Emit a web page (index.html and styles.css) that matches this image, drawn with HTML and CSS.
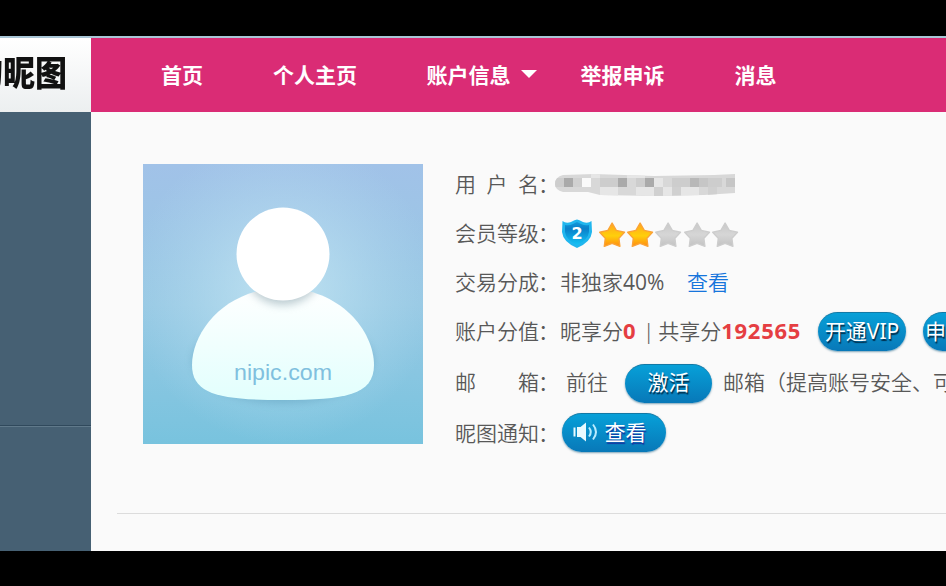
FILE: index.html
```
<!DOCTYPE html>
<html lang="zh-CN">
<head>
    <meta charset="UTF-8">
    <title>我的昵图</title>
    <link rel="stylesheet" href="styles.css">
</head>
<body>
    <svg class="defs" width="0" height="0">
        <defs>
            <linearGradient id="gold" x1="0" y1="0" x2="0" y2="1">
                <stop offset="0" stop-color="#ffa51c"/>
                <stop offset="0.55" stop-color="#ffcf0b"/>
                <stop offset="1" stop-color="#ff8a10"/>
            </linearGradient>
            <linearGradient id="silver" x1="0" y1="0" x2="0" y2="1">
                <stop offset="0" stop-color="#c8c8c8"/>
                <stop offset="0.5" stop-color="#d6d6d6"/>
                <stop offset="1" stop-color="#c2c2c2"/>
            </linearGradient>
            <symbol id="star" viewBox="0 0 28 28">
                <path d="M14 2 L18.2 9.4 L26.4 11.2 L20.8 17.4 L21.8 25.4 L14 22.4 L6.2 25.4 L7.2 17.4 L1.6 11.2 L9.8 9.4 Z" stroke-width="1.4" stroke-linejoin="round"/>
            </symbol>
        </defs>
    </svg>
    <div class="page">
        <div class="sidebar">
            <div class="logo"><span>的昵图</span></div>
            <div class="side-block"></div>
            <div class="side-block side-last"></div>
        </div>
        <div class="main">
            <div class="nav">
                <a>首页</a>
                <a>个人主页</a>
                <a class="has-menu">账户信息<i class="caret"></i></a>
                <a>举报申诉</a>
                <a>消息</a>
            </div>
            <div class="profile">
                <svg class="avatar" width="280" height="280" viewBox="0 0 280 280">
                    <defs>
                        <linearGradient id="sky" x1="0" y1="0" x2="0" y2="1">
                            <stop offset="0" stop-color="#a1c2e8"/>
                            <stop offset="0.5" stop-color="#98c9e4"/>
                            <stop offset="1" stop-color="#78c3de"/>
                        </linearGradient>
                        <radialGradient id="glow" cx="0.5" cy="0.45" r="0.55">
                            <stop offset="0" stop-color="#c8e8f4" stop-opacity="0.85"/>
                            <stop offset="1" stop-color="#b4dcf0" stop-opacity="0"/>
                        </radialGradient>
                        <linearGradient id="body" x1="0" y1="0" x2="0" y2="1">
                            <stop offset="0" stop-color="#ffffff"/>
                            <stop offset="1" stop-color="#e2fffd"/>
                        </linearGradient>
                        <clipPath id="bodyClip">
                            <path d="M140 124 C197 124 231 167 231 201 C231 231 202 236 140 236 C78 236 49 231 49 201 C49 167 83 124 140 124 Z"/>
                        </clipPath>
                        <filter id="soft" x="-30%" y="-30%" width="160%" height="160%">
                            <feGaussianBlur stdDeviation="4"/>
                        </filter>
                    </defs>
                    <rect width="280" height="280" fill="url(#sky)"/>
                    <rect width="280" height="280" fill="url(#glow)"/>
                    <ellipse cx="140" cy="196" rx="90" ry="43" fill="#4d8fae" opacity="0.4" filter="url(#soft)"/>
                    <path d="M140 124 C197 124 231 167 231 201 C231 231 202 236 140 236 C78 236 49 231 49 201 C49 167 83 124 140 124 Z" fill="url(#body)"/>
                    <g clip-path="url(#bodyClip)">
                        <ellipse cx="140" cy="98" rx="42" ry="43" fill="#7b99a4" opacity="0.5" filter="url(#soft)"/>
                    </g>
                    <circle cx="140" cy="90" r="46.5" fill="#fff"/>
                    <text x="91" y="215.500" textLength="98" lengthAdjust="spacingAndGlyphs" class="avatar-text">nipic.com</text>
                </svg>
                <div class="info">
                    <div class="row">
                        <span class="label"><b>用</b><b>户</b><b>名</b></span><span class="colon">：</span>
                        <svg class="mosaic" width="182" height="24" viewBox="0 0 182 24">
                            <clipPath id="smear">
                                <path d="M9 3 L40 2 L100 4 L160 3 L181 2 L181 21 L150 23 L100 24 L46 23 L34 20 L9 20 Q1 18 1 12 Q1 5 9 3 Z"/>
                            </clipPath>
                            <g clip-path="url(#smear)">
                                <rect width="182" height="24" fill="#d8d8d8"/>
                                <path fill="#cdcdcd" d="M1 6h9v9h-9zM46 6h18v9h-18zM82 6h9v9h-9zM118 6h18v9h-18zM154 6h14v9h-14z"/>
                                <path fill="#aaa" d="M10 6h9v9h-9zM64 6h9v9h-9zM91 6h9v9h-9z"/>
                                <path fill="#b8b8b8" d="M136 6h9v9h-9z"/>
                                <path fill="#c6c6c6" d="M145 6h9v9h-9zM172 6h9v9h-9z"/>
                                <path fill="#fafafa" d="M28 6h9v9h-9z"/>
                                <path fill="#e6e6e6" d="M37 2h9v4h-9zM73 2h18v4h-18zM100 6h9v9h-9zM46 15h18v9h-18zM82 15h18v9h-18zM109 15h9v9h-9zM127 15h18v9h-18z"/>
                                <path fill="#d0d0d0" d="M100 15h9v9h-9zM118 15h9v9h-9zM154 15h9v9h-9zM19 6h9v9h-9z"/>
                            </g>
                        </svg>
                    </div>
                    <div class="row">
                        <span class="label">会员等级</span><span class="colon">：</span>
                        <svg class="shield" width="32" height="30" viewBox="0 0 32 30">
                            <defs>
                                <linearGradient id="shieldFill" x1="0" y1="0" x2="0" y2="1">
                                    <stop offset="0" stop-color="#1299d9"/>
                                    <stop offset="0.3" stop-color="#0a80c9"/>
                                    <stop offset="1" stop-color="#12c3f5"/>
                                </linearGradient>
                            </defs>
                            <path d="M1.500 2 Q5 5 10 3 Q14 0.500 16 0.500 Q18 0.500 22 3 Q27 5 30.500 2 L31 13 Q30 23 16 29 Q2 23 1 13 Z" fill="#20b6ee"/>
                            <path d="M4 6 Q8 7 12 5 L16 3 L20 5 Q24 7 28 6 L28 13 Q27 21 16 26 Q5 21 4 13 Z" fill="url(#shieldFill)"/>
                            <text x="16" y="19.500" text-anchor="middle" class="shield-text">2</text>
                        </svg>
                        <div class="stars">
                            <svg class="star on"><use href="#star"/></svg>
                            <svg class="star on"><use href="#star"/></svg>
                            <svg class="star"><use href="#star"/></svg>
                            <svg class="star"><use href="#star"/></svg>
                            <svg class="star"><use href="#star"/></svg>
                        </div>
                    </div>
                    <div class="row">
                        <span class="label">交易分成</span><span class="colon">：</span>
                        <span class="share">非独家<span class="percent">40%</span></span>
                        <a class="link">查看</a>
                    </div>
                    <div class="row">
                        <span class="label">账户分值</span><span class="colon">：</span>
                        <span>昵享分</span><strong class="score">0</strong>
                        <span class="bar">|</span>
                        <span>共享分</span><strong class="score">192565</strong>
                        <a class="btn btn-vip">开通VIP</a>
                        <a class="btn btn-apply">申</a>
                    </div>
                    <div class="row row-mail">
                        <span class="label"><b>邮</b><b>箱</b></span><span class="colon">：</span>
                        <span class="goto">前往</span>
                        <a class="btn btn-mail">激活</a>
                        <span>邮箱（提高账号安全、可</span>
                    </div>
                    <div class="row row-notice">
                        <span class="label">昵图通知</span><span class="colon">：</span>
                        <a class="btn btn-notice">
                            <svg width="27" height="20" viewBox="0 0 27 20">
                                <path d="M0.500 5.500h2v9h-2zM4 5h3.500L13 0.500v19L7.500 15h-3.500z" fill="#e9faff"/>
                                <path d="M16 5.500q3.500 4.500 0 9M20 2.500q6 7.500 0 15" fill="none" stroke="#b9ecff" stroke-width="2"/>
                            </svg>
                            <span>查看</span>
                        </a>
                    </div>
                </div>
            </div>
        </div>
    </div>
</body>
</html>
```
FILE: styles.css
```
* {
    box-sizing: border-box;
}

body {
    margin: 0;
    padding: 36px 0 35px;
    height: 586px;
    background: #000;
    overflow: hidden;
    font-family: "Noto Sans", "Noto Sans CJK SC", sans-serif;
    font-size: 21px;
    color: #585858;
}

.defs {
    display: block;
}

.page {
    display: flex;
    height: 515px;
    border-top: 2px solid #a9c6d6;
    background: #fafafa;
}

/* left column */
.sidebar {
    display: flex;
    flex-direction: column;
    width: 91px;
    flex: none;
    background: #466073;
}

.logo {
    display: flex;
    justify-content: flex-end;
    align-items: center;
    height: 74px;
    padding: 0 24px 8px 0;
    overflow: hidden;
    background: linear-gradient(#fff, #eceff0);
}

.logo span {
    flex: none;
    font-family: "Noto Sans CJK SC", sans-serif;
    font-size: 32px;
    font-weight: 900;
    line-height: 66px;
    color: #111;
    transform: scaleY(1.1);
}

.side-block {
    height: 314px;
    border-bottom: 1px solid #30495c;
}

.side-last {
    flex: 1;
    border-top: 1px solid #60798a;
    border-bottom: none;
}

.main {
    flex: 1;
    min-width: 0;
    overflow: hidden;
}

/* top menu */
.nav {
    display: flex;
    align-items: center;
    gap: 70px;
    height: 74px;
    padding: 0 0 2px 70px;
    background: #da2c75;
    color: #fff;
    font-family: "Noto Sans CJK SC", sans-serif;
    font-weight: bold;
    white-space: nowrap;
}

.has-menu {
    display: flex;
    align-items: center;
    margin-left: -0.500px;
    margin-right: -26px;
}

.caret {
    margin-left: 10px;
    border: 8px solid transparent;
    border-top-color: #fff;
    border-bottom: none;
}

/* user card */
.profile {
    display: flex;
    height: 402px;
    margin-left: 26px;
    padding: 48px 0 0 26px;
    border-bottom: 1px solid #dcdcdc;
}

.avatar {
    flex: none;
    margin: 4px 32px 0 0;
}

.avatar-text {
    font-family: "Liberation Sans", sans-serif;
    font-size: 22px;
    fill: #80c0de;
}

.info {
    width: 700px;
    flex: none;
    margin-top: -1px;
    font-weight: 350;
    font-family: "Noto Sans", "Noto Sans CJK SC", sans-serif;
}

.row {
    display: flex;
    align-items: center;
    height: 49px;
    line-height: 30px;
    white-space: nowrap;
}

.row-mail {
    height: 54px;
}

.row-notice {
    height: 47px;
}

.label {
    display: flex;
    justify-content: space-between;
    width: 84px;
}

.label b {
    font-weight: inherit;
}

.colon {
    width: 21px;
    text-indent: -1px;
}

.mosaic {
    margin: 0 0 0 -6px;
}

.shield {
    margin: 2px 0 0 1px;
}

.shield-text {
    font-family: "DejaVu Sans", sans-serif;
    font-size: 16px;
    font-weight: bold;
    fill: #fff;
}

.stars {
    display: flex;
    margin: 4px 0 0 5px;
}

.star {
    width: 28.200px;
    height: 28px;
    fill: url(#silver);
    stroke: #cdcdcd;
}

.star.on {
    fill: url(#gold);
    stroke: #fba336;
}

.share {
    width: 127px;
}

.percent {
    font-family: "Open Sans", sans-serif;
    font-weight: 400;
}

.link {
    color: #1675dc;
}

.score {
    margin-top: -2px;
    color: #e53e42;
    font-size: 22px;
    font-weight: bold;
    letter-spacing: 0.700px;
}

.bar {
    width: 22px;
    text-align: right;
    padding-right: 4px;
}

.btn {
    display: flex;
    align-items: center;
    justify-content: center;
    flex: none;
    height: 39px;
    margin-top: 2px;
    padding-bottom: 3px;
    border-radius: 20px;
    border-top: 1px solid #1179a6;
    background: linear-gradient(#07a0d8, #0878b8);
    box-shadow: 0 1px 2px rgba(0, 80, 120, 0.5);
    color: #fff;
    font-weight: 400;
    text-shadow: 1px 2px 1px #012f4d;
}

.btn-vip {
    width: 88px;
    margin-left: 17px;
}

.btn-apply {
    width: 88px;
    margin-left: 17px;
    justify-content: flex-start;
    padding-left: 2px;
}

.goto {
    margin-left: 6px;
}

.btn-mail {
    width: 87px;
    margin: 2px 11px 0 17px;
}

.btn-notice {
    width: 104px;
    margin: 0 0 0 2px;
    padding-right: 9px;
    gap: 5px;
    text-shadow: 1px 2px 1px #1634a0;
}
```
